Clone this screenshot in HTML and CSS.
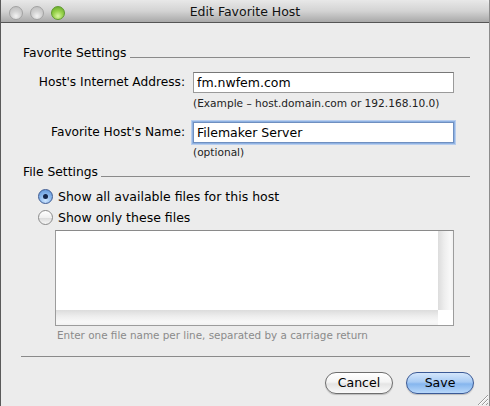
FILE: index.html
```html
<!DOCTYPE html>
<html>
<head>
<meta charset="utf-8">
<link rel="stylesheet" href="styles.css">
</head>
<body>
<div class="window">
  <div class="titlebar">
    <div class="lights">
      <span class="light gray"></span>
      <span class="light gray"></span>
      <span class="light green"></span>
    </div>
    <div class="title">Edit Favorite Host</div>
  </div>
  <div class="content">
    <div class="heading">Favorite Settings</div>
    <div class="form">
      <label class="label r1">Host's Internet Address:</label>
      <div class="field r1"><div class="input">fm.nwfem.com</div></div>
      <div class="hint h1">(Example – host.domain.com or 192.168.10.0)</div>
      <label class="label r2">Favorite Host's Name:</label>
      <div class="field r2"><div class="input focus">Filemaker Server</div></div>
      <div class="hint h2">(optional)</div>
    </div>
    <div class="heading heading2">File Settings</div>
    <div class="radios">
      <div class="radio-row"><span class="radio on"></span><span>Show all available files for this host</span></div>
      <div class="radio-row"><span class="radio"></span><span>Show only these files</span></div>
    </div>
    <div class="textarea">
      <div class="ta-main">
        <div class="ta-text"></div>
        <div class="vtrack"></div>
      </div>
      <div class="ta-bottom">
        <div class="htrack"></div>
        <div class="corner"></div>
      </div>
    </div>
    <div class="ta-hint">Enter one file name per line, separated by a carriage return</div>
    <div class="separator"></div>
    <div class="buttons">
      <button class="btn">Cancel</button>
      <button class="btn default">Save</button>
    </div>
  </div>
  <svg class="grip" width="14" height="14" viewBox="0 0 14 14">
    <path d="M13 3 L3 13 M13 7 L7 13 M13 11 L11 13" stroke="#9a9a9a" stroke-width="1"/>
    <path d="M13 4 L4 13 M13 8 L8 13" stroke="#ffffff" stroke-width="1"/>
  </svg>
</div>
</body>
</html>
```
FILE: styles.css
```css
html, body {
  margin: 0;
  padding: 0;
  background: #ececec;
}
body {
  font-family: "DejaVu Sans", "Liberation Sans", sans-serif;
  font-size: 12px;
  color: #000;
}
.window {
  position: relative;
  width: 490px;
  height: 406px;
  box-sizing: border-box;
  border-left: 1px solid #5a5a5a;
  border-right: 1px solid #8c8c8c;
  background: #ececec;
  overflow: hidden;
}
.titlebar {
  height: 22px;
  border-bottom: 1px solid #555;
  background: linear-gradient(#e8e8e8, #d3d3d3 50%, #a9a9a9);
  border-top-right-radius: 5px;
  display: flex;
  align-items: center;
  position: relative;
}
.lights {
  display: flex;
  gap: 7px;
  padding-left: 8px;
  margin-top: 4px;
}
.light {
  width: 14px;
  height: 14px;
  border-radius: 50%;
  box-sizing: border-box;
}
.light.gray {
  border: 1px solid #a2a2a2;
  background: radial-gradient(circle at 50% 75%, #f2f2f2 0%, #d2d2d2 45%, #b9b9b9 100%);
}
.light.green {
  border: 1px solid #5f9a2f;
  background: radial-gradient(circle at 50% 75%, #d8f5a0 0%, #98d24c 45%, #5fa322 100%);
}
.title {
  position: absolute;
  left: 0;
  right: 0;
  top: 4px;
  text-align: center;
  font-size: 12.5px;
  color: #111;
}
.content {
  padding: 22px 19px 0 22px;
}
.heading {
  display: flex;
  height: 16px;
  line-height: 16px;
  font-size: 12.3px;
}
.heading::after {
  content: "";
  flex: 1;
  border-bottom: 1px solid #8a8a8a;
  margin-bottom: 3px;
  margin-left: 3px;
}
.form {
  display: grid;
  grid-template-columns: 162px 261px;
  column-gap: 8px;
  margin-top: 11px;
}
.label {
  grid-column: 1;
  text-align: right;
  height: 21px;
  line-height: 20px;
  font-size: 12.2px;
}
.field {
  grid-column: 2;
}
.input {
  height: 21px;
  box-sizing: border-box;
  border: 1px solid #9a9a9a;
  border-top-color: #777;
  background: #fff;
  padding: 0 3px;
  line-height: 19px;
  font-size: 12.5px;
}
.input.focus {
  box-shadow: 0 0 0 1px #8fb2e2, 0 0 0 2px #b7cdee;
  border-color: #6f8fc0;
}
.hint {
  grid-column: 2;
  font-size: 10.6px;
  line-height: 13px;
  color: #222;
  margin-top: 4px;
}
.hint.h1 {
  margin-bottom: 12px;
}
.hint.h2 {
  margin-top: 3px;
}
.heading2 {
  margin-top: 5px;
}
.radios {
  margin-top: 6px;
  padding-left: 15px;
}
.radio-row {
  display: flex;
  align-items: center;
  gap: 5px;
  height: 21px;
  font-size: 12.5px;
}
.radio {
  width: 15px;
  height: 15px;
  border-radius: 50%;
  box-sizing: border-box;
  border: 1px solid #8a8a8a;
  background: linear-gradient(#ffffff, #f0f0f0 50%, #dcdcdc 55%, #f6f6f6);
  position: relative;
}
.radio.on {
  border-color: #3d5b93;
  background: radial-gradient(circle at 50% 80%, #cfe6ff 0%, #8ab7ec 50%, #5a8fd4 100%);
}
.radio.on::after {
  content: "";
  position: absolute;
  left: 4px;
  top: 4px;
  width: 5px;
  height: 5px;
  border-radius: 50%;
  background: #15264a;
}
.textarea {
  margin-top: 2px;
  margin-left: 32px;
  width: 399px;
  height: 96px;
  box-sizing: border-box;
  border: 1px solid #9c9c9c;
  border-top-color: #8a8a8a;
  background: #fff;
  display: flex;
  flex-direction: column;
}
.ta-main {
  flex: 1;
  display: flex;
}
.ta-text {
  flex: 1;
}
.vtrack {
  width: 15px;
  background: linear-gradient(90deg, #dcdcdc, #ededed 40%, #f8f8f8 80%, #f2f2f2);
}
.ta-bottom {
  height: 15px;
  display: flex;
}
.htrack {
  flex: 1;
  background: linear-gradient(#dcdcdc, #ededed 40%, #f8f8f8 80%, #f2f2f2);
}
.corner {
  width: 15px;
  background: #fff;
}
.ta-hint {
  margin-top: 3px;
  margin-left: 34px;
  font-size: 10.4px;
  line-height: 13px;
  color: #8a8a8a;
}
.separator {
  margin-top: 14px;
  margin-left: -2px;
  border-bottom: 1px solid #8a8a8a;
}
.buttons {
  display: flex;
  justify-content: flex-end;
  gap: 13px;
  margin-top: 15px;
  margin-right: -4px;
}
.btn {
  width: 68px;
  height: 22px;
  border-radius: 11px;
  box-sizing: border-box;
  border: 1px solid #6e6e6e;
  background: linear-gradient(#ffffff, #f4f4f4 45%, #e4e4e4 55%, #fafafa);
  font-family: "DejaVu Sans", "Liberation Sans", sans-serif;
  font-size: 12.5px;
  color: #000;
  padding: 0;
  line-height: 20px;
  box-shadow: 0 1px 1px rgba(0,0,0,0.2);
}
.btn.default {
  border-color: #3b5a96;
  background: linear-gradient(#d4e6fb, #a8cbf4 45%, #86b6ee 55%, #b8d8fa);
}
.grip {
  position: absolute;
  right: 0;
  bottom: 0;
}
```
